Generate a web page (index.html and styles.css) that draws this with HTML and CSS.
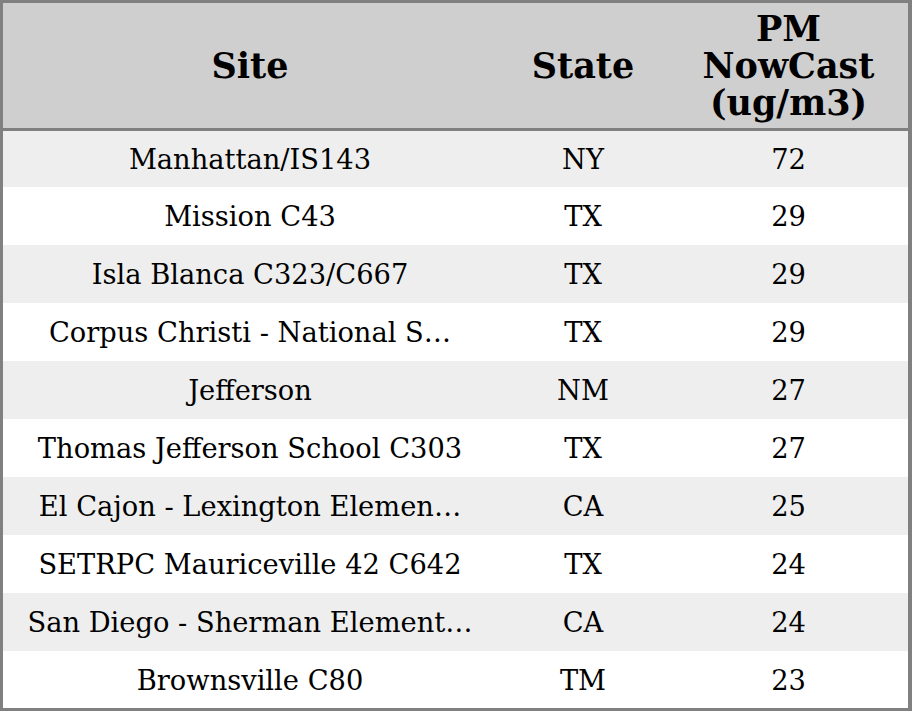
FILE: index.html
```html
<!DOCTYPE html>
<html>
<head>
<meta charset="utf-8">
<link rel="stylesheet" href="styles.css">
</head>
<body>
<div class="frame">
<table class="grid">
<colgroup><col class="c-site"><col class="c-state"><col class="c-pm"></colgroup>
<thead>
<tr><th>Site</th><th>State</th><th>PM<br>NowCast<br>(ug/m3)</th></tr>
</thead>
<tbody>
<tr class="r1"><td>Manhattan/IS143</td><td>NY</td><td>72</td></tr>
<tr><td>Mission C43</td><td>TX</td><td>29</td></tr>
<tr><td>Isla Blanca C323/C667</td><td>TX</td><td>29</td></tr>
<tr><td>Corpus Christi - National S…</td><td>TX</td><td>29</td></tr>
<tr><td>Jefferson</td><td>NM</td><td>27</td></tr>
<tr><td>Thomas Jefferson School C303</td><td>TX</td><td>27</td></tr>
<tr><td>El Cajon - Lexington Elemen…</td><td>CA</td><td>25</td></tr>
<tr><td>SETRPC Mauriceville 42 C642</td><td>TX</td><td>24</td></tr>
<tr><td>San Diego - Sherman Element…</td><td>CA</td><td>24</td></tr>
<tr class="r10"><td>Brownsville C80</td><td>TM</td><td>23</td></tr>
</tbody>
</table>
</div>
</body>
</html>
```
FILE: styles.css
```css
html, body {
  margin: 0;
  padding: 0;
  background: #ffffff;
}
.frame {
  width: 912px;
  height: 711px;
  box-sizing: border-box;
  border-style: solid;
  border-color: #808080;
  border-width: 3px 4px 3px 3px;
  overflow: hidden;
}
.grid {
  width: 905px;
  border-collapse: collapse;
  table-layout: fixed;
  font-family: "DejaVu Serif", serif;
  color: #000;
}
.c-site { width: 494px; }
.c-state { width: 172px; }
.c-pm { width: 239px; }
.grid th {
  background: #cfcfcf;
  height: 125px;
  padding: 0;
  font-size: 35px;
  line-height: 37px;
  font-weight: bold;
  text-align: center;
  vertical-align: middle;
  border-bottom: 3px solid #808080;
}
.grid td {
  height: 57px;
  padding: 1px 0 0;
  font-size: 27.3px;
  text-align: center;
  vertical-align: middle;
  white-space: nowrap;
  overflow: hidden;
}
.grid tbody tr:nth-child(odd) td { background: #eeeeee; }
.grid tbody tr:nth-child(even) td { background: #ffffff; }
.grid tr.r1 td { height: 55px; }
.grid tr.r10 td { height: 56px; }
```
